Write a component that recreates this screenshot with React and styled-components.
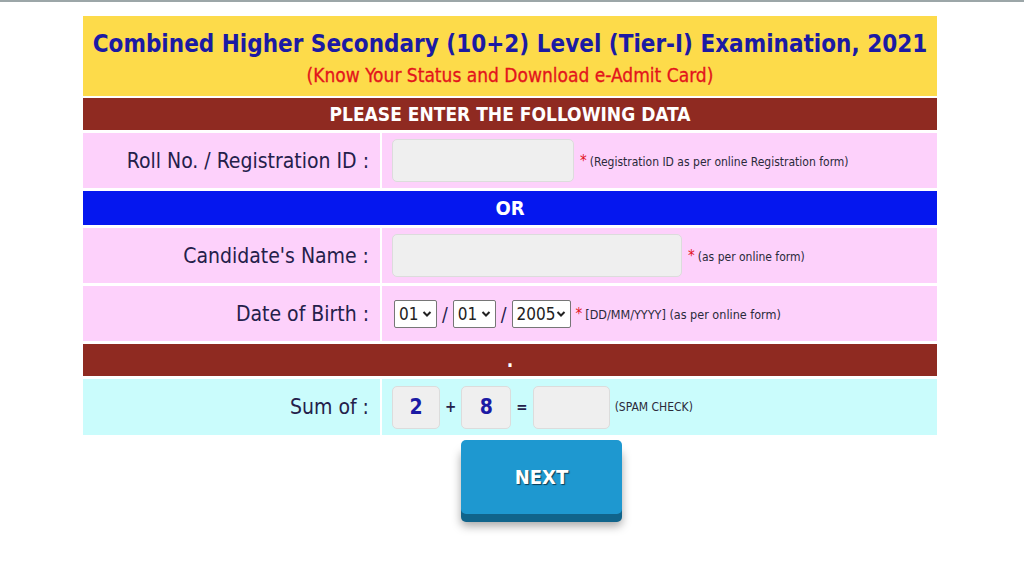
import styled, { createGlobalStyle } from "styled-components";

const FONT = `"DejaVu Sans Condensed", "DejaVu Sans", sans-serif`;

const GlobalStyle = createGlobalStyle`
  body {
    margin: 0;
    background: #ffffff;
    font-family: ${FONT};
  }
`;

const Page = styled.div`
  border-top: 2px solid #9ca6a8;
  padding-top: 14px;
  height: 553px;
  overflow: hidden;
`;

const Table = styled.div`
  width: 854px;
  margin-left: 83px;
  display: flex;
  flex-direction: column;
  gap: 3px;
`;

const Header = styled.div`
  background: #fddb4a;
  height: 80px;
  margin-bottom: -1px;
  box-sizing: border-box;
  padding-top: 13px;
  display: flex;
  flex-direction: column;
  align-items: center;
  gap: 5px;
`;

const Title = styled.h1`
  margin: 0;
  font-size: 24px;
  font-weight: bold;
  color: #1b1aa4;
  line-height: 30px;
  white-space: nowrap;
`;

const Subtitle = styled.div`
  font-size: 19px;
  color: #e3141c;
  line-height: 22px;
  -webkit-text-stroke: 0.3px #e3141c;
`;

const Bar = styled.div`
  background: ${(p) => p.$bg};
  height: ${(p) => p.$h}px;
  display: flex;
  align-items: center;
  justify-content: center;
  color: #ffffff;
  font-weight: bold;
  font-size: ${(p) => p.$fs || 19}px;
`;

const Row = styled.div`
  display: grid;
  grid-template-columns: 297px 1fr;
  column-gap: 2px;
  height: ${(p) => p.$h || 55}px;
`;

const Label = styled.div`
  background: ${(p) => p.$bg};
  display: flex;
  align-items: center;
  justify-content: flex-end;
  padding-right: 11px;
  font-size: 21px;
  color: #24204a;
`;

const Value = styled.div`
  background: ${(p) => p.$bg};
  display: flex;
  align-items: center;
  padding-left: 10px;
  gap: ${(p) => p.$gap || 6}px;
`;

const TextBox = styled.div`
  width: ${(p) => p.$w}px;
  height: 43px;
  box-sizing: border-box;
  background: #efefef;
  border: 1px solid #dcdcdc;
  border-radius: 5px;
  display: flex;
  align-items: center;
  justify-content: center;
  font-size: 21px;
  font-weight: bold;
  color: #1b1aa4;
`;

const Hint = styled.span`
  font-size: ${(p) => p.$fs || 12}px;
  color: #2a2a3a;
`;

const Star = styled.span`
  color: #e3141c;
  font-size: 15px;
  margin-right: 3px;
`;

const Select = styled.div`
  box-sizing: border-box;
  width: ${(p) => p.$w}px;
  height: 28px;
  border: 1px solid #767676;
  border-radius: 2px;
  background: #ffffff;
  display: flex;
  align-items: center;
  justify-content: space-between;
  padding: 0 4px 0 4px;
  font-size: 17px;
  color: #222;
  &:first-child {
    margin-left: 2px;
  }
`;

const Slash = styled.span`
  font-size: 19px;
  color: #24204a;
`;

const Op = styled.span`
  font-size: 15px;
  font-weight: bold;
  color: #24204a;
`;

const ButtonWrap = styled.div`
  padding-left: 461px;
  padding-top: 5px;
`;

const NextButton = styled.button`
  width: 161px;
  height: 74px;
  border: none;
  border-radius: 5px;
  background: #1e98d0;
  box-shadow: 0 8px 0 #10648b, 0 12px 10px rgba(0, 0, 0, 0.35);
  color: #ffffff;
  font-family: ${FONT};
  font-size: 20px;
  font-weight: bold;
  text-shadow: 1px 1px 1px #0b3d55;
  cursor: pointer;
`;

function Chevron() {
  return (
    <svg width="10" height="8" viewBox="0 0 10 8">
      <path d="M1.5 2 L5 5.5 L8.5 2" fill="none" stroke="#222" strokeWidth="2" />
    </svg>
  );
}

function DateSelect({ value, width }) {
  return (
    <Select $w={width}>
      {value}
      <Chevron />
    </Select>
  );
}

const PINK = "#fdd1fb";
const CYAN = "#cafcfc";

export default function App() {
  return (
    <Page>
      <GlobalStyle />
      <Table>
        <Header>
          <Title>Combined Higher Secondary (10+2) Level (Tier-I) Examination, 2021</Title>
          <Subtitle>(Know Your Status and Download e-Admit Card)</Subtitle>
        </Header>
        <Bar $bg="#8f2a21" $h={32}>PLEASE ENTER THE FOLLOWING DATA</Bar>
        <Row>
          <Label $bg={PINK}>Roll No. / Registration ID :</Label>
          <Value $bg={PINK}>
            <TextBox $w={182} />
            <Hint>
              <Star>*</Star>(Registration ID as per online Registration form)
            </Hint>
          </Value>
        </Row>
        <Bar $bg="#0517ef" $h={34} $fs={20}>OR</Bar>
        <Row>
          <Label $bg={PINK}>Candidate's Name :</Label>
          <Value $bg={PINK}>
            <TextBox $w={290} />
            <Hint>
              <Star>*</Star>(as per online form)
            </Hint>
          </Value>
        </Row>
        <Row>
          <Label $bg={PINK}>Date of Birth :</Label>
          <Value $bg={PINK} $gap={5}>
            <DateSelect value="01" width={43} />
            <Slash>/</Slash>
            <DateSelect value="01" width={43} />
            <Slash>/</Slash>
            <DateSelect value="2005" width={59} />
            <Hint $fs={12.5}>
              <Star>*</Star>[DD/MM/YYYY] (as per online form)
            </Hint>
          </Value>
        </Row>
        <Bar $bg="#8f2a21" $h={32}>.</Bar>
        <Row $h={56}>
          <Label $bg={CYAN}>Sum of :</Label>
          <Value $bg={CYAN} $gap={5}>
            <TextBox $w={48}>2</TextBox>
            <Op>+</Op>
            <TextBox $w={50}>8</TextBox>
            <Op>=</Op>
            <TextBox $w={77} />
            <Hint>(SPAM CHECK)</Hint>
          </Value>
        </Row>
      </Table>
      <ButtonWrap>
        <NextButton>NEXT</NextButton>
      </ButtonWrap>
    </Page>
  );
}
